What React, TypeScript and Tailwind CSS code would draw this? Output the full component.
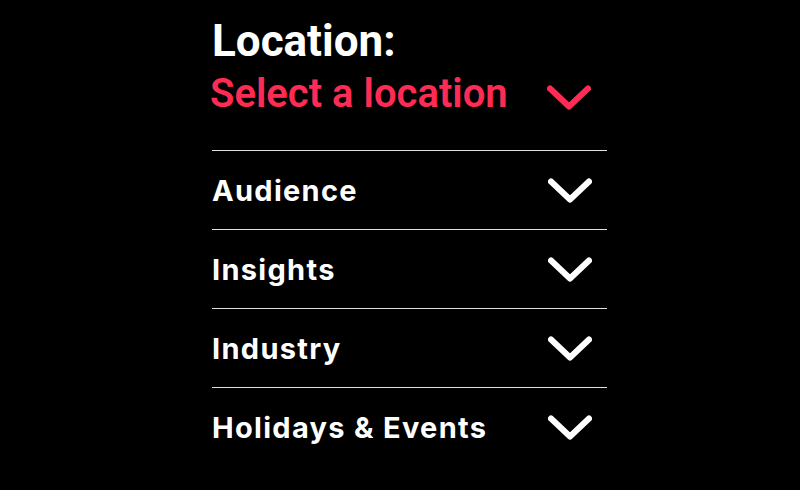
const Chevron = ({ className }: { className?: string }) => (
  <svg className={className} width="44" height="25" viewBox="0 0 44 25" fill="none" stroke="currentColor" strokeWidth="6" strokeLinecap="round" strokeLinejoin="round">
    <path d="M3 3.5 L22 21.5 L41 3.5" />
  </svg>
)

const sections = ['Audience', 'Insights', 'Industry', 'Holidays & Events']

export default function App() {
  return (
    <div className="w-[800px] h-[490px] bg-black overflow-hidden">
      <div className="ml-[212px] w-[395px] pt-[15px]">
        <h1 className="text-white text-[44px] leading-[52px] font-bold" style={{ fontFamily: 'Roboto, sans-serif' }}>
          Location:
        </h1>
        <button className="w-full flex items-center justify-between mt-[2px] -ml-[2px] text-[#fe2c55]">
          <span className="text-[40px] leading-[50px] font-semibold" style={{ fontFamily: 'Roboto, sans-serif' }}>
            Select a location
          </span>
          <Chevron className="mr-[14px] mt-[7px]" />
        </button>
        <div className="mt-[31px]">
          {sections.map((s) => (
            <div key={s} className="border-t border-[#e0e0e0] h-[79px] flex items-center justify-between">
              <span className="text-white text-[29px] font-bold tracking-[1.3px] pt-[2px]" style={{ fontFamily: 'Inter, sans-serif' }}>
                {s}
              </span>
              <Chevron className="text-white mr-[15px]" />
            </div>
          ))}
        </div>
      </div>
    </div>
  )
}
